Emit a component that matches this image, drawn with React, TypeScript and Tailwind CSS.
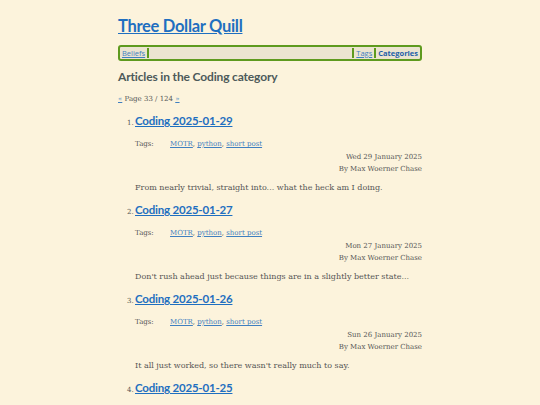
import React from "react";

const posts = [
  { n: 1, title: "Coding 2025-01-29", date: "Wed 29 January 2025", summary: "From nearly trivial, straight into... what the heck am I doing." },
  { n: 2, title: "Coding 2025-01-27", date: "Mon 27 January 2025", summary: "Don't rush ahead just because things are in a slightly better state..." },
  { n: 3, title: "Coding 2025-01-26", date: "Sun 26 January 2025", summary: "It all just worked, so there wasn't really much to say." },
  { n: 4, title: "Coding 2025-01-25", date: "", summary: "" },
];

const head = { fontFamily: 'Lato, "Open Sans", sans-serif' };
const nav = { fontFamily: '"Open Sans", "Noto Sans", sans-serif' };
const body = { fontFamily: '"DejaVu Serif", serif' };

export default function App() {
  return (
    <div className="h-[405px] w-[540px] overflow-hidden bg-[#fcf3dc]">
      <div className="mx-auto w-[304px] pt-[15px]">
        <h1 className="text-[16.5px] font-bold leading-[22px] tracking-[-0.3px]" style={head}>
          <a className="text-[#1f6fc0] underline">Three Dollar Quill</a>
        </h1>
        <nav className="mt-[8px] flex h-[16px] items-center rounded-[3px] border-2 border-[#5e9a1e] bg-[#ebe4d0] px-[2px] text-[7.5px] leading-[10px]" style={nav}>
          <a className="border-r-2 border-[#5e9a1e] pr-[2px] text-[#3f7fc0] underline">Beliefs</a>
          <div className="flex-1" />
          <a className="border-l-2 border-[#5e9a1e] px-[2px] text-[#3f7fc0] underline">Tags</a>
          <a className="border-l-2 border-[#5e9a1e] pl-[2px] font-bold text-[#1f5fa8]">Categories</a>
        </nav>
        <h2 className="mt-[8px] text-[12px] font-bold leading-[16px] tracking-[-0.15px] text-[#4d5a5a]" style={head}>
          Articles in the Coding category
        </h2>
        <div className="mt-[9px] text-[7px] leading-[10px] text-[#555]" style={body}>
          <a className="text-[#3f7fc0] underline">«</a> Page 33 / 124 <a className="text-[#3f7fc0] underline">»</a>
        </div>
        <ol className="mt-[8px]">
          {posts.map((p) => (
            <li key={p.n} className="flex h-[89px] flex-col pl-[17px]">
              <div className="flex items-baseline">
                <span className="-ml-[8px] w-[8px] text-[7px] text-[#555]" style={body}>{p.n}.</span>
                <a className="text-[11.5px] font-bold leading-[18px] tracking-[-0.2px] text-[#1f6fc0] underline" style={head}>{p.title}</a>
              </div>
              {p.date && (
                <>
                  <div className="mt-[8px] flex text-[7px] leading-[12px] text-[#555]" style={body}>
                    <span className="w-[35px]">Tags:</span>
                    <span>
                      <a className="text-[#3f7fc0] underline">MOTR</a>, <a className="text-[#3f7fc0] underline">python</a>, <a className="text-[#3f7fc0] underline">short post</a>
                    </span>
                  </div>
                  <div className="mt-[1px] text-right text-[7px] leading-[12px] text-[#555]" style={body}>{p.date}</div>
                  <div className="text-right text-[7px] leading-[12px] text-[#555]" style={body}>By Max Woerner Chase</div>
                  <div className="mt-[7px] text-[8px] leading-[12px] text-[#555]" style={body}>{p.summary}</div>
                </>
              )}
            </li>
          ))}
        </ol>
      </div>
    </div>
  );
}
